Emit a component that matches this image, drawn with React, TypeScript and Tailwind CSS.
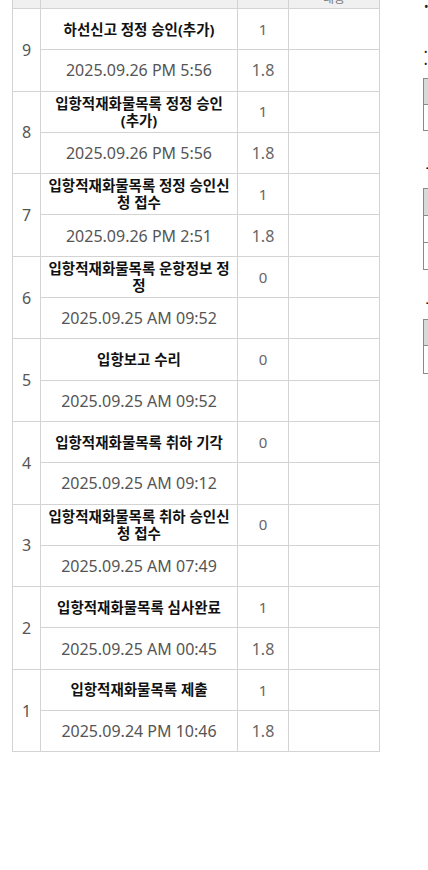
import React from "react";

type Row = { no: number; title: string; time: string; a: string; b: string };

const rows: Row[] = [
  { no: 9, title: "하선신고 정정 승인(추가)", time: "2025.09.26 PM 5:56", a: "1", b: "1.8" },
  { no: 8, title: "입항적재화물목록 정정 승인(추가)", time: "2025.09.26 PM 5:56", a: "1", b: "1.8" },
  { no: 7, title: "입항적재화물목록 정정 승인신청 접수", time: "2025.09.26 PM 2:51", a: "1", b: "1.8" },
  { no: 6, title: "입항적재화물목록 운항정보 정정", time: "2025.09.25 AM 09:52", a: "0", b: "" },
  { no: 5, title: "입항보고 수리", time: "2025.09.25 AM 09:52", a: "0", b: "" },
  { no: 4, title: "입항적재화물목록 취하 기각", time: "2025.09.25 AM 09:12", a: "0", b: "" },
  { no: 3, title: "입항적재화물목록 취하 승인신청 접수", time: "2025.09.25 AM 07:49", a: "0", b: "" },
  { no: 2, title: "입항적재화물목록 심사완료", time: "2025.09.25 AM 00:45", a: "1", b: "1.8" },
  { no: 1, title: "입항적재화물목록 제출", time: "2025.09.24 PM 10:46", a: "1", b: "1.8" },
];

const cell = "border border-[#d3d3d3] text-center align-middle";

// keeps "(추가)" in one piece when the title wraps
function Title({ text }: { text: string }) {
  const i = text.indexOf("(");
  if (i < 0) return <>{text}</>;
  return (
    <>
      {text.slice(0, i)}
      <span className="whitespace-nowrap">{text.slice(i)}</span>
    </>
  );
}

function SideTable({ heights }: { heights: number[] }) {
  return (
    <div className="flex flex-col border border-[#8a8a8a] w-[200px]">
      {heights.map((h, i) => (
        <div
          key={i}
          className={
            i === 0
              ? "bg-[#d9d9d9] border-b border-[#8a8a8a]"
              : i < heights.length - 1
              ? "bg-white border-b border-[#8a8a8a]"
              : "bg-white"
          }
          style={{ height: h }}
        />
      ))}
    </div>
  );
}

export default function App() {
  return (
    <div
      className="w-[428px] h-[870px] overflow-hidden bg-white flex items-start"
      style={{ fontFamily: '"Noto Sans", "Noto Sans CJK KR", sans-serif' }}
    >
      {/* history table, scrolled so the header is mostly hidden */}
      <div className="pl-[12px] shrink-0">
        <table className="border-collapse w-[367px] table-fixed mt-[-30px]">
          <colgroup>
            <col className="w-[28px]" />
            <col className="w-[197px]" />
            <col className="w-[51px]" />
            <col className="w-[91px]" />
          </colgroup>
          <thead>
            <tr className="h-[38px] bg-[#f0f0f0]">
              <th className={`${cell} text-[12px] font-normal text-[#666]`}>번호</th>
              <th className={`${cell} text-[12px] font-normal text-[#666]`}>처리단계</th>
              <th className={`${cell} text-[12px] font-normal text-[#666]`}>건수</th>
              <th className="border border-[#d3d3d3] text-center align-bottom pb-[2px] text-[12px] leading-[14px] font-normal text-[#777]">
                내용
              </th>
            </tr>
          </thead>
          <tbody>
            {rows.map((r) => (
              <React.Fragment key={r.no}>
                <tr className="h-[41.3px]">
                  <td rowSpan={2} className={`${cell} text-[16px] text-[#555]`}>
                    {r.no}
                  </td>
                  <td className={`${cell} px-[4px] text-[14.5px] leading-[17px] font-bold text-[#111]`}>
                    <Title text={r.title} />
                  </td>
                  <td className={`${cell} text-[15px] text-[#666]`}>{r.a}</td>
                  <td className={cell}></td>
                </tr>
                <tr className="h-[41.3px]">
                  <td className={`${cell} text-[16px] text-[#555]`}>{r.time}</td>
                  <td className={`${cell} text-[16px] text-[#666]`}>{r.b}</td>
                  <td className={cell}></td>
                </tr>
              </React.Fragment>
            ))}
          </tbody>
        </table>
      </div>

      {/* side info panel, cut off at the right edge */}
      <div className="ml-[43px] w-[220px] shrink-0 flex flex-col text-[12px] text-[#222]">
        <div className="leading-[14px] pl-[1px] whitespace-nowrap">• 안내 사항</div>
        <div className="h-[32px]" />
        <div className="text-[9px] leading-[12px] pl-[1px] whitespace-nowrap">• 참고</div>
        <div className="text-[9px] leading-[12px] pl-[1px] whitespace-nowrap">• 참고</div>
        <div className="h-[8px]" />
        <SideTable heights={[26, 25]} />
        <div className="h-[30px]" />
        <div className="leading-[14px] pl-[3px] font-bold whitespace-nowrap">- 화물</div>
        <div className="h-[13px]" />
        <SideTable heights={[27, 27, 26]} />
        <div className="h-[26px]" />
        <div className="leading-[14px] pl-[3px] font-bold whitespace-nowrap">- 선박</div>
        <div className="h-[9px]" />
        <SideTable heights={[26, 27]} />
      </div>
    </div>
  );
}
